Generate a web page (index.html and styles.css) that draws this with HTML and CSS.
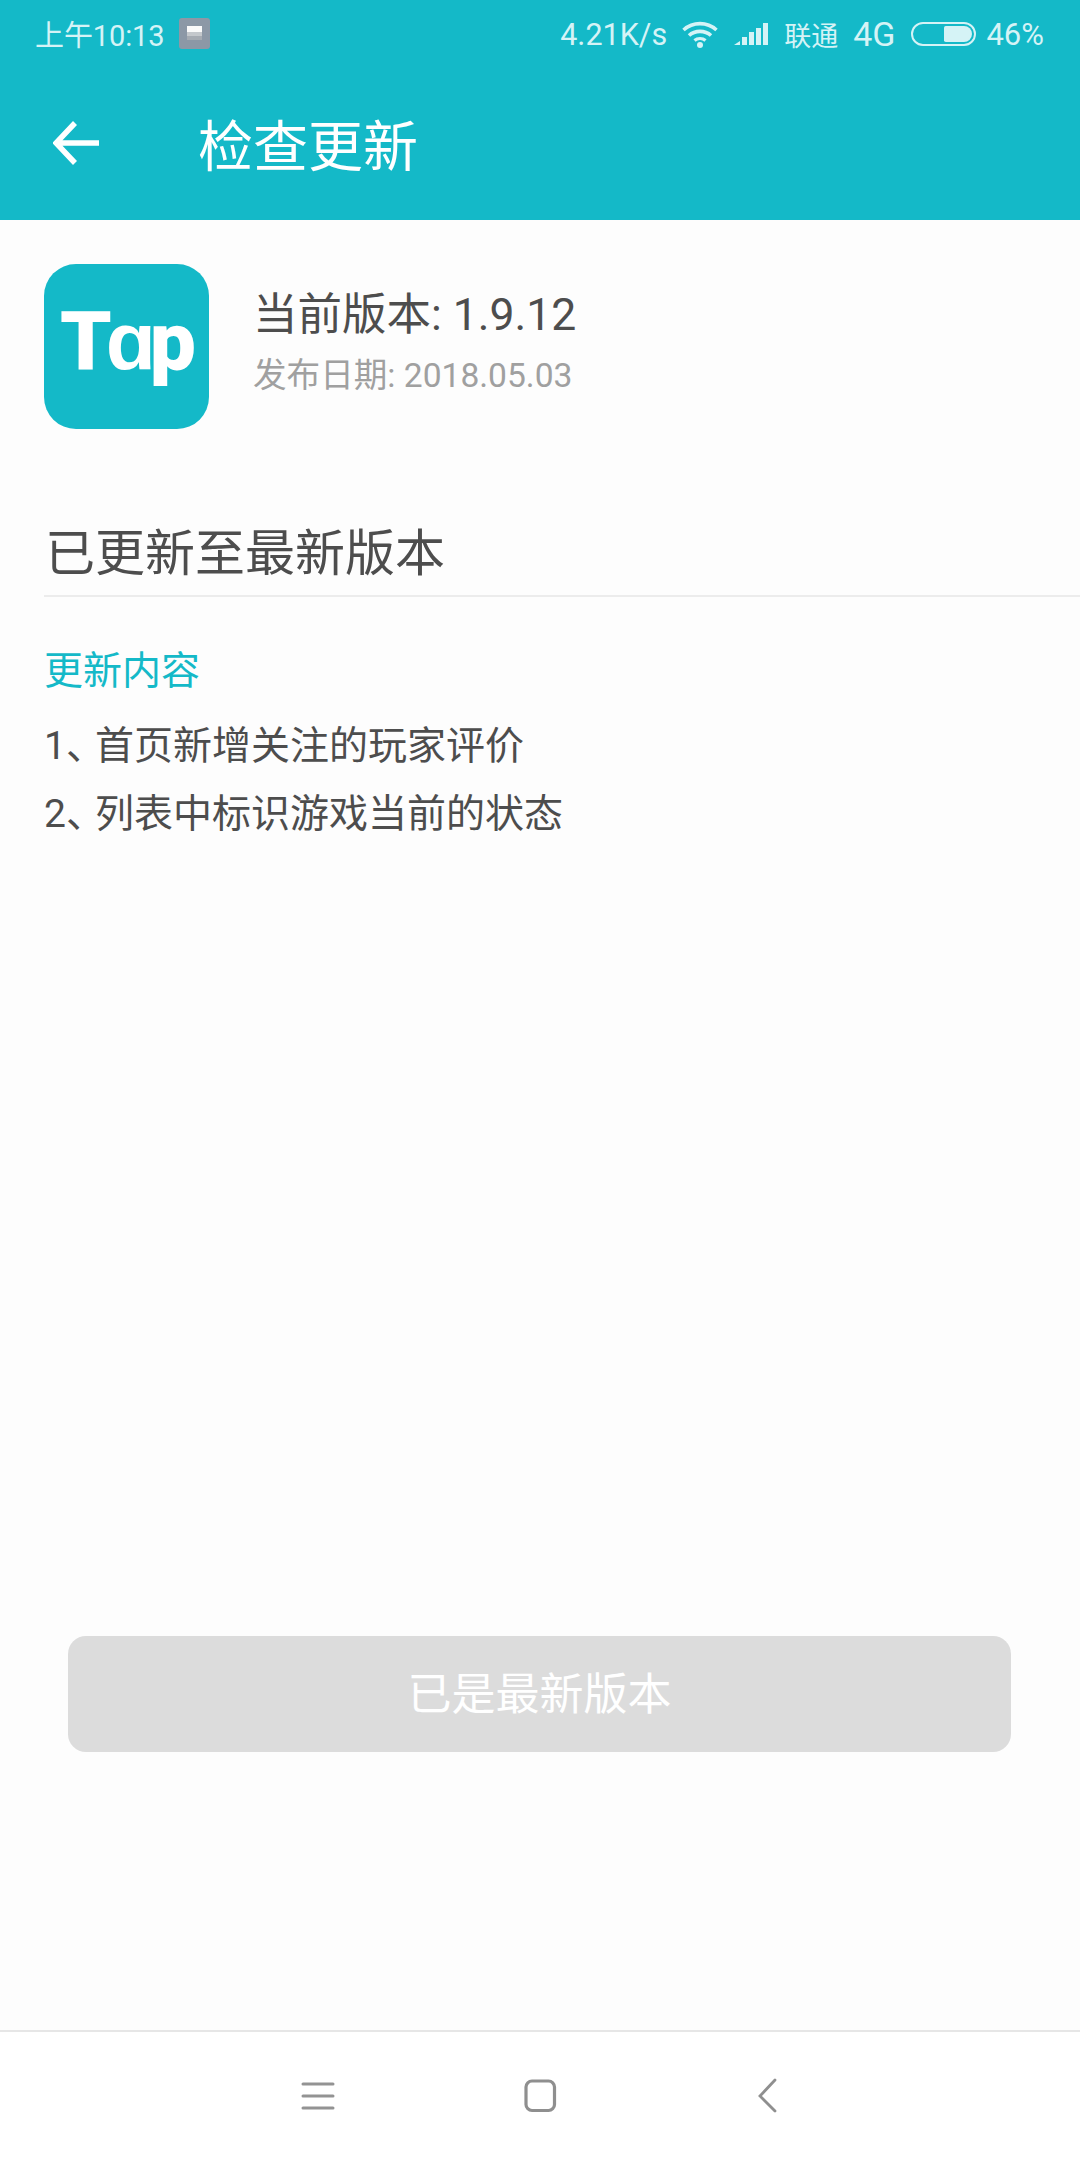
FILE: index.html
```html
<!DOCTYPE html>
<html lang="zh-CN">
<head>
<meta charset="utf-8">
<title>检查更新</title>
<link rel="stylesheet" href="styles.css">
</head>
<body>
<div class="screen">
  <header class="header">
    <div class="status">
      <div class="status-left">
        <span class="clock">上午10:13</span>
        <span class="note"><span class="note-bar"></span></span>
      </div>
      <div class="status-right">
        <span class="speed">4.21K/s</span>
        <svg class="wifi" width="36" height="27" viewBox="0 0 36 27"><path d="M1.500 9 C11 0.500 25 0.500 34.500 9" fill="none" stroke="#d5f3f6" stroke-width="3.600"/><path d="M7 14.500 C13 9 23 9 29 14.500" fill="none" stroke="#d5f3f6" stroke-width="3.600"/><path d="M12.500 19.500 C15.500 16.800 20.500 16.800 23.500 19.500" fill="none" stroke="#d5f3f6" stroke-width="3.200"/><circle cx="18" cy="24" r="3" fill="#d5f3f6"/></svg>
        <svg class="signal" width="34" height="22" viewBox="0 0 34 22"><path d="M0 22 L6 18 V22Z M8 14 H13 V22 H8Z M15 9 H20 V22 H15Z M22 5 H27 V22 H22Z M29 0 H34 V22 H29Z" fill="#d5f3f6"/></svg>
        <span class="carrier">联通</span>
        <span class="net">4G</span>
        <span class="battery"><span class="battery-level"></span></span>
        <span class="percent">46%</span>
      </div>
    </div>
    <div class="toolbar">
      <svg class="back" width="46" height="44" viewBox="0 0 46 44"><path d="M46 22 H4 M22 2 L3 22 L22 42" fill="none" stroke="#fff" stroke-width="5.500"/></svg>
      <h1 class="title">检查更新</h1>
    </div>
  </header>
  <main class="main">
    <section class="app">
      <div class="logo"><span class="logo-text">Tɑp</span></div>
      <div class="app-info">
        <div class="version">当前版本: 1.9.12</div>
        <div class="date">发布日期: 2018.05.03</div>
      </div>
    </section>
    <h2 class="state">已更新至最新版本</h2>
    <h3 class="log-title">更新内容</h3>
    <p class="log-line">1<span class="comma">、</span>首页新增关注的玩家评价</p>
    <p class="log-line">2<span class="comma">、</span>列表中标识游戏当前的状态</p>
    <button class="update-btn" type="button">已是最新版本</button>
  </main>
  <nav class="nav">
    <svg class="nav-icon" width="40" height="40" viewBox="0 0 40 40"><path d="M5 8 H35 M5 20 H35 M5 32 H35" stroke="#939393" stroke-width="3" stroke-linecap="round"/></svg>
    <svg class="nav-icon" width="40" height="40" viewBox="0 0 40 40"><rect x="6" y="5" width="28.500" height="29.500" rx="6" fill="none" stroke="#8f8f8f" stroke-width="3.200"/></svg>
    <svg class="nav-icon nav-back" width="40" height="40" viewBox="0 0 40 40"><path d="M28 4 L13 20 L28 35" fill="none" stroke="#8f8f8f" stroke-width="2.800" stroke-linecap="round"/></svg>
  </nav>
</div>
</body>
</html>
```
FILE: styles.css
```css
* { box-sizing: border-box; }
html, body { margin: 0; padding: 0; }
body { font-family: Roboto, "Noto Sans CJK SC", sans-serif; background: #fdfdfd; }
.screen { width: 1080px; height: 2160px; display: flex; flex-direction: column; overflow: hidden; }

.header { background: #14b9c8; height: 220px; flex: none; }
.status { height: 66px; display: flex; justify-content: space-between; align-items: center; padding: 0 36px 0 35px; color: #d5f3f6; }
.status-left { display: flex; align-items: center; gap: 14px; font-size: 29px; }
.clock { letter-spacing: -0.1px; }
.note { width: 31px; height: 31px; border-radius: 3px; background: #8c98a6; display: flex; align-items: flex-start; justify-content: center; padding-top: 8px; }
.note-bar { width: 15px; height: 14px; background: linear-gradient(#fafafa 0 40%, #c4c8cc 40% 70%, #a5abb2 70%); }
.status-right { display: flex; align-items: center; font-size: 31px; padding-top: 2px; }
.speed { margin-right: 15px; font-size: 30.500px; }
.wifi { margin-right: 16px; }
.signal { margin-right: 16px; }
.carrier { margin-right: 15px; font-size: 27px; }
.net { margin-right: 16px; font-size: 34px; }
.battery { width: 65px; height: 24px; border: 2.500px solid #d5f3f6; border-radius: 13px; display: flex; justify-content: flex-end; padding: 2px; margin-right: 10px; }
.battery-level { width: 28px; height: 100%; background: #d5f3f6; border-radius: 2px 9px 9px 2px; }
.toolbar { height: 154px; display: flex; align-items: center; padding-left: 53px; }
.back { flex: none; }
.title { margin: 8px 0 0 99px; font-size: 55px; font-weight: 400; color: #fff; line-height: 1; }

.main { flex: 1; display: flex; flex-direction: column; padding-left: 44px; color: #4d4d4d; }
.app { display: flex; align-items: center; margin-top: 44px; }
.logo { width: 165px; height: 165px; border-radius: 32px; background: #14b9c8; display: flex; align-items: center; justify-content: center; flex: none; padding: 0 3px 11px 0; }
.logo-text { font-family: Roboto, sans-serif; font-weight: 900; font-size: 82px; letter-spacing: -6px; color: #fff; line-height: 1; }
.app-info { margin: 0 0 8px 44px; display: flex; flex-direction: column; }
.version { font-size: 44.500px; line-height: 56px; color: #4d4d4d; }
.date { font-size: 33.600px; line-height: 44px; color: #a0a0a0; margin-top: 11px; }
.state { margin: 92px 0 0; font-size: 50px; font-weight: 400; line-height: 66px; height: 76px; padding-left: 1px; border-bottom: 2px solid #ececec; color: #4d4d4d; }
.log-title { margin: 46px 0 0; font-size: 39px; font-weight: 400; line-height: 56px; color: #14b9c8; }
.log-line { margin: 19px 0 -7px; font-size: 39px; line-height: 56px; color: #4d4d4d; }
.comma { letter-spacing: -10px; }
.update-btn { margin: auto 0 278px 24px; width: 943px; height: 116px; flex: none; border: 0; border-radius: 18px; background: #dcdcdc; color: #fff; font: inherit; font-size: 44px; padding: 0 0 6px; }

.nav { height: 130px; flex: none; background: #fff; border-top: 2px solid #e6e6e6; display: flex; align-items: center; padding-left: 298px; gap: 182px; }
.nav-icon { flex: none; }
.nav-back { margin-left: 5px; }
```
